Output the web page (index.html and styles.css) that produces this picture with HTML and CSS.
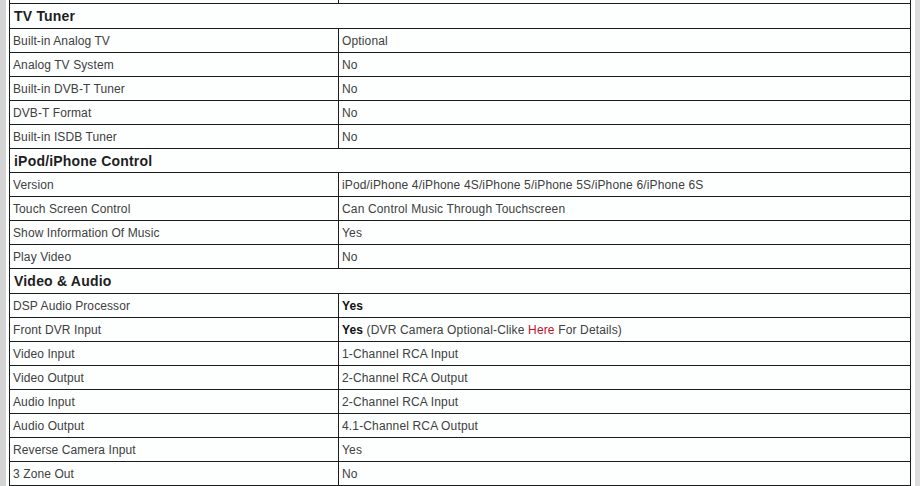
FILE: index.html
```html
<!DOCTYPE html>
<html>
<head>
<meta charset="utf-8">
<link rel="stylesheet" href="styles.css">
</head>
<body>
<div class="page">
  <div class="strip-left"></div>
  <div class="spec">
    <div class="row prev"><div class="k"></div><div class="v"></div></div>

    <div class="head h25">TV Tuner</div>
    <div class="row"><div class="k">Built-in Analog TV</div><div class="v">Optional</div></div>
    <div class="row"><div class="k">Analog TV System</div><div class="v">No</div></div>
    <div class="row"><div class="k">Built-in DVB-T Tuner</div><div class="v">No</div></div>
    <div class="row"><div class="k">DVB-T Format</div><div class="v">No</div></div>
    <div class="row"><div class="k">Built-in ISDB Tuner</div><div class="v">No</div></div>

    <div class="head h24">iPod/iPhone Control</div>
    <div class="row"><div class="k">Version</div><div class="v">iPod/iPhone 4/iPhone 4S/iPhone 5/iPhone 5S/iPhone 6/iPhone 6S</div></div>
    <div class="row"><div class="k">Touch Screen Control</div><div class="v">Can Control Music Through Touchscreen</div></div>
    <div class="row"><div class="k">Show Information Of Music</div><div class="v">Yes</div></div>
    <div class="row"><div class="k">Play Video</div><div class="v">No</div></div>

    <div class="head h25">Video &amp; Audio</div>
    <div class="row"><div class="k">DSP Audio Processor</div><div class="v"><b>Yes</b></div></div>
    <div class="row"><div class="k">Front DVR Input</div><div class="v"><b>Yes</b> (DVR Camera Optional-Clike <a class="link" href="#">Here</a> For Details)</div></div>
    <div class="row"><div class="k">Video Input</div><div class="v">1-Channel RCA Input</div></div>
    <div class="row"><div class="k">Video Output</div><div class="v">2-Channel RCA Output</div></div>
    <div class="row"><div class="k">Audio Input</div><div class="v">2-Channel RCA Input</div></div>
    <div class="row"><div class="k">Audio Output</div><div class="v">4.1-Channel RCA Output</div></div>
    <div class="row"><div class="k">Reverse Camera Input</div><div class="v">Yes</div></div>
    <div class="row"><div class="k">3 Zone Out</div><div class="v">No</div></div>
  </div>
  <div class="gap-right"></div>
  <div class="strip-right"></div>
</div>
</body>
</html>
```

FILE: styles.css
```css
html, body {
  margin: 0;
  padding: 0;
  background: #fdfefe;
  overflow: hidden;
}
body {
  font-family: "Liberation Sans", Arial, sans-serif;
  font-size: 12px;
  color: #404040;
}
.page {
  display: flex;
  width: 920px;
  height: 486px;
  align-items: flex-start;
}
.strip-left {
  width: 6px;
  height: 486px;
  background: #d4d4d4;
  margin-right: 3px;
  flex: none;
}
.spec {
  width: 900px;
  flex: none;
  border-left: 1px solid #1c1c1c;
  border-right: 1px solid #1c1c1c;
  margin-top: -20px;
}
.gap-right {
  width: 4px;
  flex: none;
}
.strip-right {
  width: 5px;
  height: 486px;
  background: #dcdcdc;
  flex: none;
}
.row {
  display: flex;
  height: 23px;
  border-bottom: 1px solid #1c1c1c;
}
.row .k {
  width: 325px;
  flex: none;
  padding-left: 3px;
  border-right: 1px solid #1c1c1c;
  display: flex;
  align-items: center;
  letter-spacing: 0.1px;
}
.row .v {
  flex: 1;
  padding-left: 3px;
  display: flex;
  align-items: center;
  white-space: pre;
  letter-spacing: 0.15px;
}
.v b {
  color: #111;
  font-weight: bold;
}
.link {
  color: #c4102f;
  text-decoration: none;
}
.head {
  display: flex;
  align-items: center;
  padding-left: 4px;
  border-bottom: 1px solid #1c1c1c;
  font-size: 14px;
  font-weight: bold;
  color: #1e1e1e;
  letter-spacing: 0.2px;
}
.h25 { height: 24px; }
.h24 { height: 23px; }
```
